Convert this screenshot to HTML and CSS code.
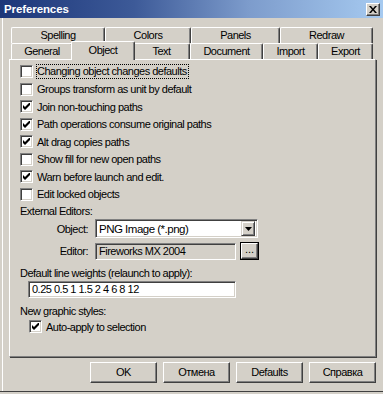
FILE: index.html
```html
<!DOCTYPE html>
<html>
<head>
<meta charset="utf-8">
<link rel="stylesheet" href="styles.css">
</head>
<body>
<div class="window">
  <div class="titlebar">
    <span class="title">Preferences</span>
    <span class="close"><svg width="8" height="7" viewBox="0 0 8 7"><path d="M0 0h2l2 2.5L6 0h2L5 3.5 8 7H6L4 4.5 2 7H0l3-3.5z" fill="#000"/></svg></span>
  </div>
  <div class="content">
    <div class="tabs">
      <div class="tabrow back">
        <div class="tab w-spell">Spelling</div>
        <div class="tab w-colors">Colors</div>
        <div class="tab w-panels">Panels</div>
        <div class="tab w-redraw">Redraw</div>
      </div>
      <div class="tabrow front">
        <div class="tab w-general">General</div>
        <div class="tab sel w-object">Object</div>
        <div class="tab w-text">Text</div>
        <div class="tab w-doc">Document</div>
        <div class="tab w-import">Import</div>
        <div class="tab w-export">Export</div>
      </div>
    </div>
    <div class="panel">
      <div class="cb-list">
        <div class="cb-row"><span class="box"></span><span class="focus">Changing object changes defaults</span></div>
        <div class="cb-row"><span class="box"></span><span>Groups transform as unit by default</span></div>
        <div class="cb-row"><span class="box checked"><svg width="7" height="7" viewBox="0 0 7 7"><path d="M0 2L2 4L7 -1L7 2L2 7L0 5Z" fill="#000"/></svg></span><span>Join non-touching paths</span></div>
        <div class="cb-row"><span class="box checked"><svg width="7" height="7" viewBox="0 0 7 7"><path d="M0 2L2 4L7 -1L7 2L2 7L0 5Z" fill="#000"/></svg></span><span>Path operations consume original paths</span></div>
        <div class="cb-row"><span class="box checked"><svg width="7" height="7" viewBox="0 0 7 7"><path d="M0 2L2 4L7 -1L7 2L2 7L0 5Z" fill="#000"/></svg></span><span>Alt drag copies paths</span></div>
        <div class="cb-row"><span class="box"></span><span>Show fill for new open paths</span></div>
        <div class="cb-row"><span class="box checked"><svg width="7" height="7" viewBox="0 0 7 7"><path d="M0 2L2 4L7 -1L7 2L2 7L0 5Z" fill="#000"/></svg></span><span>Warn before launch and edit.</span></div>
        <div class="cb-row"><span class="box"></span><span>Edit locked objects</span></div>
      </div>
      <div class="label-line">External Editors:</div>
      <div class="field-row">
        <span class="flabel">Object:</span>
        <div class="select">
          <span class="select-text">PNG Image (*.png)</span>
          <span class="drop"><svg width="7" height="4" viewBox="0 0 7 4"><path d="M0 0H7L3.5 4Z" fill="#000"/></svg></span>
        </div>
      </div>
      <div class="field-row editor-row">
        <span class="flabel">Editor:</span>
        <div class="textbox disabled">Fireworks MX 2004</div>
        <div class="browse"><span class="browse-inner">...</span></div>
      </div>
      <div class="label-line lw">Default line weights (relaunch to apply):</div>
      <div class="textbox weights">0.25 0.5 1 1.5 2 4 6 8 12</div>
      <div class="label-line ng">New graphic styles:</div>
      <div class="cb-row sub"><span class="box checked"><svg width="7" height="7" viewBox="0 0 7 7"><path d="M0 2L2 4L7 -1L7 2L2 7L0 5Z" fill="#000"/></svg></span><span>Auto-apply to selection</span></div>
    </div>
    <div class="buttons">
      <div class="btn">OK</div>
      <div class="btn">Отмена</div>
      <div class="btn">Defaults</div>
      <div class="btn">Справка</div>
    </div>
  </div>
</div>
</body>
</html>
```

FILE: styles.css
```css
* { box-sizing: border-box; }
html, body { margin: 0; padding: 0; }
body {
  width: 383px;
  height: 394px;
  overflow: hidden;
  background: #d4d0c8;
  font-family: "Liberation Sans", Arial, sans-serif;
  font-size: 11px;
  letter-spacing: -0.5px;
  color: #000;
}
.window {
  height: 392px;
  border-bottom: 1px solid #404040;
  display: flex;
  flex-direction: column;
}
.titlebar {
  height: 18px;
  flex: none;
  background: linear-gradient(to right, #1c3679 0%, #3d5a98 35%, #7d9ccc 65%, #a6caf0 100%);
  display: flex;
  align-items: center;
  justify-content: space-between;
  padding: 0 3px 0 4px;
}
.title {
  color: #fff;
  font-weight: bold;
  font-size: 11.5px;
  letter-spacing: -0.1px;
}
.close {
  width: 14px;
  height: 13px;
  background: #d4d0c8;
  border: 1px solid;
  border-color: #fff #404040 #404040 #fff;
  box-shadow: inset -1px -1px #808080;
  display: flex;
  align-items: center;
  justify-content: center;
}
.content {
  flex: 1;
  margin-left: 2px;
  border-left: 1px solid #fff;
  padding: 9px 0 0 6px;
  display: flex;
  flex-direction: column;
}
.tabs { margin-left: 2px; }
.tabrow {
  display: flex;
  height: 16px;
  align-items: flex-end;
}
.tab {
  height: 16px;
  background: #d4d0c8;
  border-top: 1px solid #fff;
  border-left: 1px solid #fff;
  border-right: 1px solid #404040;
  border-radius: 2px 2px 0 0;
  box-shadow: inset -1px 0 #808080;
  text-align: center;
  line-height: 15px;
}
.w-spell { width: 94px; }
.w-colors { width: 86px; }
.w-panels { width: 89px; }
.w-redraw { width: 93px; }
.w-general { width: 62px; }
.w-object { width: 64px; }
.w-text { width: 57px; }
.w-doc { width: 73px; }
.w-import { width: 55px; }
.w-export { width: 55px; }
.tab.sel {
  height: 19px;
  margin: 0 -2px -1px -2px;
  position: relative;
  z-index: 1;
  line-height: 16px;
}
.panel {
  width: 367px;
  height: 298px;
  flex: none;
  border: 1px solid;
  border-color: #fff #808080 #808080 #fff;
  box-shadow: 1px 1px 0 #404040;
  padding: 3px 0 0 10px;
}
.cb-row {
  height: 17.5px;
  display: flex;
  align-items: center;
  gap: 4px;
  white-space: nowrap;
}
.box {
  width: 13px;
  height: 13px;
  flex: none;
  background: #fff;
  border: 1px solid;
  border-color: #808080 #fff #fff #808080;
  box-shadow: inset 1px 1px #404040, inset -1px -1px #d4d0c8;
  display: flex;
  align-items: center;
  justify-content: center;
}
.box svg { display: block; }
.focus {
  border: 1px dotted #000;
  padding: 0 1px 0 0;
  line-height: 13px;
  margin-left: -1px;
}
.label-line {
  height: 16px;
  line-height: 16px;
  white-space: nowrap;
}
.field-row {
  display: flex;
  align-items: center;
  height: 19px;
}
.flabel {
  width: 68px;
  text-align: right;
  margin-right: 7px;
}
.select {
  width: 163px;
  height: 19px;
  background: #fff;
  border: 1px solid;
  border-color: #808080 #fff #fff #808080;
  box-shadow: inset 1px 1px #404040, inset -1px -1px #d4d0c8;
  display: flex;
  align-items: center;
  justify-content: space-between;
  padding: 2px 2px 2px 3px;
}
.select-text { font-size: 11.5px; }
.drop {
  width: 14px;
  height: 15px;
  background: #d4d0c8;
  border: 1px solid;
  border-color: #d4d0c8 #404040 #404040 #d4d0c8;
  box-shadow: inset 1px 1px #fff, inset -1px -1px #808080;
  display: flex;
  align-items: center;
  justify-content: center;
}
.editor-row {
  margin-top: 4px;
  height: 18px;
}
.textbox {
  height: 17px;
  background: #fff;
  border: 1px solid;
  border-color: #808080 #fff #fff #808080;
  box-shadow: inset 1px 1px #404040, inset -1px -1px #d4d0c8;
  padding: 0 3px;
  line-height: 15px;
  white-space: nowrap;
}
.textbox.disabled {
  width: 141px;
  background: #d4d0c8;
}
.browse {
  width: 19px;
  height: 18px;
  margin-left: 4px;
  border: 1px solid #000;
}
.browse-inner {
  display: block;
  width: 100%;
  height: 100%;
  border: 1px solid;
  border-color: #fff #404040 #404040 #fff;
  box-shadow: inset -1px -1px #808080;
  text-align: center;
  line-height: 11px;
  letter-spacing: 0;
}
.lw { margin-top: 5px; }
.weights {
  width: 208px;
  margin-left: 8px;
}
.ng { margin-top: 5px; }
.cb-row.sub {
  margin-left: 9px;
  height: 15px;
}
.buttons {
  width: 367px;
  margin-top: 5px;
  display: flex;
  justify-content: flex-end;
  gap: 6px;
}
.btn {
  width: 67px;
  height: 21px;
  border: 1px solid;
  border-color: #fff #404040 #404040 #fff;
  box-shadow: inset -1px -1px #808080;
  text-align: center;
  line-height: 18px;
}
```
